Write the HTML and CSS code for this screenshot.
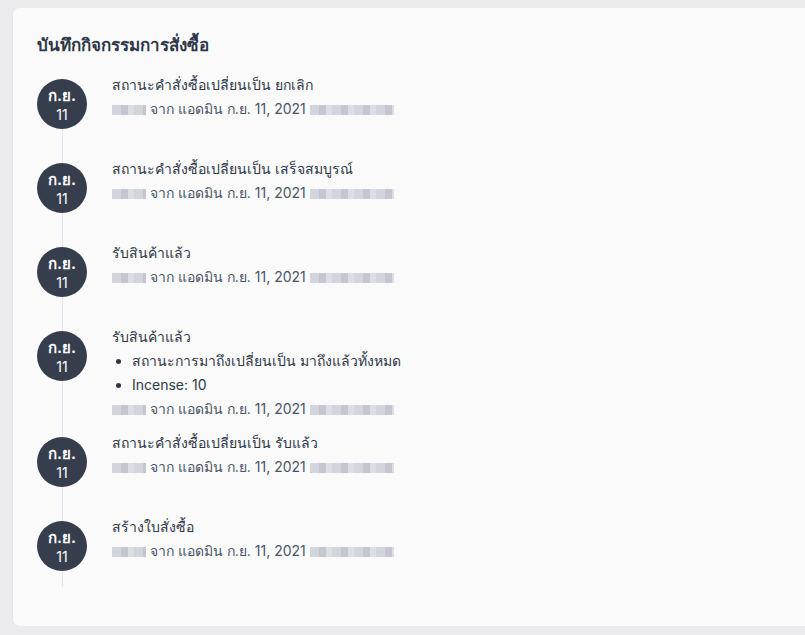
FILE: index.html
```html
<!DOCTYPE html>
<html lang="th">
<head>
    <meta charset="UTF-8">
    <meta name="viewport" content="width=device-width, initial-scale=1.0">
    <title>บันทึกกิจกรรมการสั่งซื้อ</title>
    <link rel="stylesheet" href="styles.css">
</head>
<body>
    <div class="card">
        <h2 class="card-title">บันทึกกิจกรรมการสั่งซื้อ</h2>
        <div class="timeline">
            <div class="entry">
                <div class="marker">
                    <div class="date-badge"><span class="month">ก.ย.</span><span class="day">11</span></div>
                    <div class="stem"></div>
                </div>
                <div class="entry-body">
                    <div class="entry-title">สถานะคำสั่งซื้อเปลี่ยนเป็น ยกเลิก</div>
                    <div class="entry-meta"><span class="blur blur-name"></span> จาก แอดมิน ก.ย. 11, 2021 <span class="blur blur-time"></span></div>
                </div>
            </div>
            <div class="entry">
                <div class="marker">
                    <div class="date-badge"><span class="month">ก.ย.</span><span class="day">11</span></div>
                    <div class="stem"></div>
                </div>
                <div class="entry-body">
                    <div class="entry-title">สถานะคำสั่งซื้อเปลี่ยนเป็น เสร็จสมบูรณ์</div>
                    <div class="entry-meta"><span class="blur blur-name"></span> จาก แอดมิน ก.ย. 11, 2021 <span class="blur blur-time"></span></div>
                </div>
            </div>
            <div class="entry">
                <div class="marker">
                    <div class="date-badge"><span class="month">ก.ย.</span><span class="day">11</span></div>
                    <div class="stem"></div>
                </div>
                <div class="entry-body">
                    <div class="entry-title">รับสินค้าแล้ว</div>
                    <div class="entry-meta"><span class="blur blur-name"></span> จาก แอดมิน ก.ย. 11, 2021 <span class="blur blur-time"></span></div>
                </div>
            </div>
            <div class="entry">
                <div class="marker">
                    <div class="date-badge"><span class="month">ก.ย.</span><span class="day">11</span></div>
                    <div class="stem"></div>
                </div>
                <div class="entry-body">
                    <div class="entry-title">รับสินค้าแล้ว</div>
                    <ul class="entry-list">
                        <li>สถานะการมาถึงเปลี่ยนเป็น มาถึงแล้วทั้งหมด</li>
                        <li>Incense: 10</li>
                    </ul>
                    <div class="entry-meta"><span class="blur blur-name"></span> จาก แอดมิน ก.ย. 11, 2021 <span class="blur blur-time"></span></div>
                </div>
            </div>
            <div class="entry">
                <div class="marker">
                    <div class="date-badge"><span class="month">ก.ย.</span><span class="day">11</span></div>
                    <div class="stem"></div>
                </div>
                <div class="entry-body">
                    <div class="entry-title">สถานะคำสั่งซื้อเปลี่ยนเป็น รับแล้ว</div>
                    <div class="entry-meta"><span class="blur blur-name"></span> จาก แอดมิน ก.ย. 11, 2021 <span class="blur blur-time"></span></div>
                </div>
            </div>
            <div class="entry">
                <div class="marker">
                    <div class="date-badge"><span class="month">ก.ย.</span><span class="day">11</span></div>
                    <div class="stem"></div>
                </div>
                <div class="entry-body">
                    <div class="entry-title">สร้างใบสั่งซื้อ</div>
                    <div class="entry-meta"><span class="blur blur-name"></span> จาก แอดมิน ก.ย. 11, 2021 <span class="blur blur-time"></span></div>
                </div>
            </div>
        </div>
    </div>
</body>
</html>
```

FILE: styles.css
```css
body {
    margin: 0;
    padding: 8px 0 0 13px;
    background-color: #ebebed;
    font-family: Inter, "Noto Sans", sans-serif;
    color: #2d3748;
    overflow: hidden;
}
.card {
    background-color: #fafafa;
    border-radius: 6px 0 0 6px;
    box-shadow: 0 1px 2px rgba(0,0,0,0.08);
    padding: 24px 24px 40px 24px;
    box-sizing: border-box;
    height: 618px;
}
.card-title {
    margin: 0 0 21px 0;
    font-size: 17px;
    font-weight: 700;
    line-height: 26px;
    color: #2d3748;
}
.entry {
    display: flex;
}
.marker {
    width: 50px;
    display: flex;
    flex-direction: column;
    align-items: center;
    flex-shrink: 0;
}
.date-badge {
    width: 50px;
    height: 50px;
    border-radius: 50%;
    background-color: #363d4d;
    color: white;
    display: flex;
    flex-direction: column;
    align-items: center;
    justify-content: center;
    padding-top: 2px;
    box-sizing: border-box;
}
.date-badge .month {
    font-size: 15px;
    font-weight: 700;
    line-height: 18px;
}
.date-badge .day {
    font-size: 14px;
    line-height: 19px;
}
.stem {
    width: 1px;
    flex: 1;
    min-height: 34px;
    background-color: #e2e4ec;
}
.entry:last-child .stem {
    min-height: 16px;
}
.entry-body {
    margin-left: 25px;
    margin-top: -6px;
    padding-bottom: 16px;
    font-size: 14px;
    line-height: 24px;
}
.entry-title {
    color: #2d3748;
}
.entry-meta {
    color: #4a5568;
}
.entry-list {
    margin: 0;
    padding-left: 20px;
}
.blur {
    display: inline-block;
    height: 10px;
    vertical-align: -1px;
    background: repeating-linear-gradient(90deg, #d3d5dc 0 9px, #c4c7d0 9px 16px, #dcdee3 16px 22px);
}
.blur-name {
    width: 34px;
}
.blur-time {
    width: 84px;
}
```
